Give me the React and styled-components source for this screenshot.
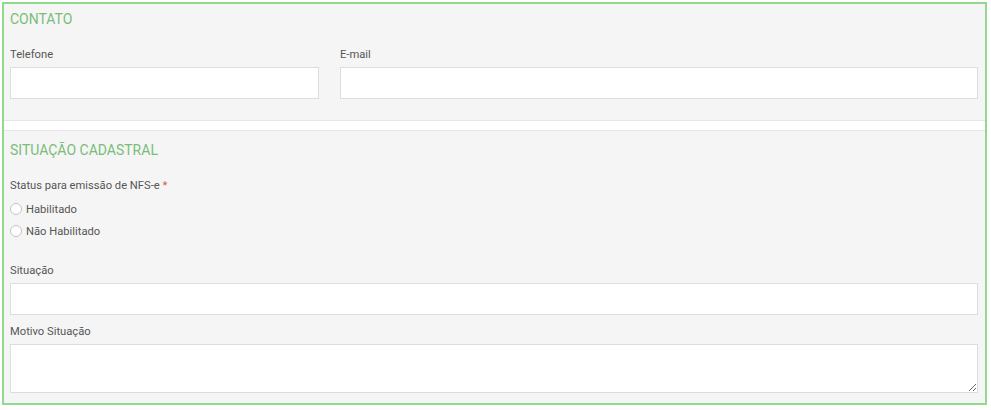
import React from "react";
import styled, { createGlobalStyle } from "styled-components";

const GlobalStyle = createGlobalStyle`
  * { box-sizing: border-box; }
  body {
    margin: 0;
    background: #ffffff;
    font-family: Roboto, "Liberation Sans", Arial, sans-serif;
  }
`;

const Frame = styled.div`
  margin: 2px 4px 4px 2px;
  height: 403px;
  border: 2px solid #93d88f;
  background: #f5f5f5;
  display: flex;
  flex-direction: column;
`;

const Section = styled.section`
  padding: ${p => p.$pad};
`;

const SectionTitle = styled.h3`
  margin: 0 0 18px;
  font-size: 14px;
  line-height: 20px;
  font-weight: 400;
  color: #79bd79;
  text-transform: uppercase;
`;

const Divider = styled.div`
  height: 11px;
  background: #ffffff;
  border-top: 1px solid #e6e6e6;
  border-bottom: 1px solid #e6e6e6;
`;

const Row = styled.div`
  display: grid;
  grid-template-columns: 309px 1fr;
  gap: 21px;
`;

const Field = styled.div`
  display: flex;
  flex-direction: column;
  margin-top: ${p => p.$top || 0}px;
`;

const Label = styled.label`
  font-size: 11.2px;
  line-height: 16px;
  color: #555;
  margin-bottom: 4px;
`;

const Required = styled.span`
  color: #d9534f;
`;

const Input = styled.input`
  height: 32px;
  border: 1px solid #dddddd;
  background: #ffffff;
  padding: 4px 8px;
  font: inherit;
  font-size: 12px;
  outline: none;
`;

const TextArea = styled.textarea`
  height: 49px;
  border: 1px solid #dddddd;
  background: #ffffff;
  padding: 4px 8px;
  font: inherit;
  font-size: 12px;
  outline: none;
`;

const RadioRow = styled.label`
  display: flex;
  align-items: center;
  gap: 4px;
  height: 22px;
  font-size: 11.2px;
  color: #555;
`;

const RadioDot = styled.span`
  width: 12px;
  height: 12px;
  border-radius: 50%;
  border: 1px solid #c4c4c4;
  background: #ffffff;
`;

const Radios = styled.div`
  margin-top: 2px;
  margin-bottom: 21px;
`;

export default function App() {
  return (
    <>
      <GlobalStyle />
      <Frame>
        <Section $pad="5px 7px 21px 6px">
          <SectionTitle>Contato</SectionTitle>
          <Row>
            <Field>
              <Label>Telefone</Label>
              <Input />
            </Field>
            <Field>
              <Label>E-mail</Label>
              <Input />
            </Field>
          </Row>
        </Section>
        <Divider />
        <Section $pad="9px 7px 10px 6px">
          <SectionTitle>Situação Cadastral</SectionTitle>
          <Label as="div">
            Status para emissão de NFS-e <Required>*</Required>
          </Label>
          <Radios>
            <RadioRow>
              <RadioDot />
              Habilitado
            </RadioRow>
            <RadioRow>
              <RadioDot />
              Não Habilitado
            </RadioRow>
          </Radios>
          <Field>
            <Label>Situação</Label>
            <Input />
          </Field>
          <Field $top={9}>
            <Label>Motivo Situação</Label>
            <TextArea />
          </Field>
        </Section>
      </Frame>
    </>
  );
}
